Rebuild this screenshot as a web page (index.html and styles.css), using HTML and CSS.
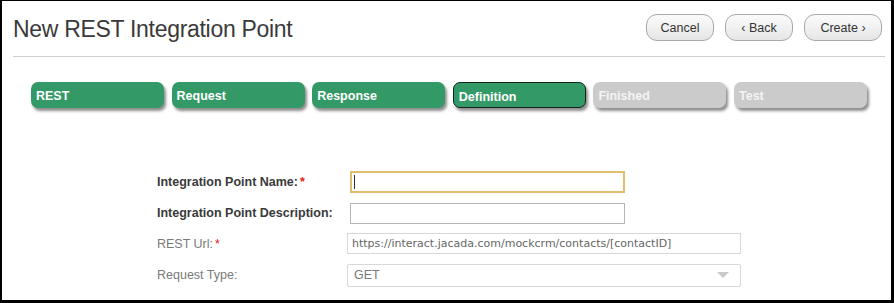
FILE: index.html
```html
<!DOCTYPE html>
<html lang="en">

<head>
  <meta charset="UTF-8" />
  <title>New REST Integration Point</title>
  <link rel="stylesheet" href="styles.css">
</head>

<body>
  <div class="frame">
    <header class="top">
      <h1>New REST Integration Point</h1>
      <div class="actions">
        <button class="btn btn-cancel">Cancel</button>
        <button class="btn btn-back">&lsaquo; Back</button>
        <button class="btn btn-create">Create &rsaquo;</button>
      </div>
    </header>

    <!-- wizard steps -->
    <ul class="steps">
      <li class="step done">REST</li>
      <li class="step done">Request</li>
      <li class="step done">Response</li>
      <li class="step done current">Definition</li>
      <li class="step todo">Finished</li>
      <li class="step todo">Test</li>
    </ul>

    <form class="fields">
      <label class="lbl strong">Integration Point Name:<span class="req">*</span></label>
      <input class="inp inp-name focus" type="text" />

      <label class="lbl strong">Integration Point Description:</label>
      <input class="inp inp-name" type="text" />

      <label class="lbl muted">REST Url:<span class="req">*</span></label>
      <input class="inp inp-wide" type="text" value="https://interact.jacada.com/mockcrm/contacts/[contactID]" disabled />

      <label class="lbl muted">Request Type:</label>
      <div class="inp inp-wide select">
        <span>GET</span>
        <span class="caret"></span>
      </div>
    </form>
  </div>
</body>

</html>
```

FILE: styles.css
```css
html,
body {
  margin: 0;
  padding: 0;
  background: #000;
}

.frame {
  box-sizing: border-box;
  width: 894px;
  height: 303px;
  background: #fff;
  border-style: solid;
  border-color: #000;
  border-width: 1px 3px 3px 2px;
  font-family: 'Liberation Sans', Arial, sans-serif;
  color: #333;
  overflow: hidden;
}

.top {
  display: flex;
  justify-content: space-between;
  align-items: flex-start;
  margin: 0 6px 0 11px;
  height: 55px;
  border-bottom: 1px solid #cfcfcf;
}

.top h1 {
  margin: 15px 0 0 0;
  font-weight: 400;
  font-size: 23px;
  letter-spacing: -0.3px;
  color: #3a3a3a;
}

.actions {
  display: flex;
  gap: 11px;
  margin: 13px 3px 0 0;
}

.btn {
  height: 27px;
  padding: 0;
  border: 1px solid #a9a9a9;
  border-radius: 11px;
  background: linear-gradient(#fbfbfb, #e6e6e6);
  font-family: 'Liberation Sans', Arial, sans-serif;
  font-size: 12.5px;
  color: #333;
  cursor: pointer;
}

.btn-cancel { width: 68px; }
.btn-back { width: 68px; }
.btn-create { width: 78px; }

.steps {
  list-style: none;
  display: flex;
  gap: 7.6px;
  margin: 25px 0 0 29px;
  padding: 0;
}

.step {
  box-sizing: border-box;
  width: 133px;
  height: 26px;
  padding: 7px 5px 0 5px;
  border-radius: 7px;
  font-size: 12.5px;
  font-weight: 700;
  color: #fff;
  box-shadow: 2px 3px 3px rgba(0, 0, 0, 0.45);
}

.step.done {
  background: #339966;
}

.step.current {
  border: 1px solid #14241b;
  padding: 7px 5px 0 5px;
}

.step.todo {
  background: #cbcbcb;
  color: #f4f4f4;
}

.fields {
  display: grid;
  grid-template-columns: 190px 394px;
  row-gap: 9.5px;
  align-items: center;
  margin: 63px 0 0 155px;
}

.lbl {
  font-size: 12.5px;
}

.lbl.strong {
  font-weight: 700;
  color: #3a3a3a;
}

.lbl.muted {
  color: #7a7a7a;
}

.req {
  color: #e02020;
  margin-left: 2px;
}

.inp {
  box-sizing: border-box;
  height: 21px;
  border: 1px solid #b5b5b5;
  background: #fff;
  font-family: 'DejaVu Sans', Verdana, sans-serif;
  font-size: 11px;
  color: #666;
  padding: 0 4px;
}

.inp-name {
  width: 275px;
  margin-left: 3px;
}

/* focused field, with its text cursor */
.inp.focus {
  height: 22px;
  border: 2px solid #e0be6a;
  outline: none;
  background: #fff linear-gradient(#333, #333) no-repeat 2px 2px / 1px 14px;
}

.inp-wide {
  width: 394px;
  border-color: #d8d8d8;
  background: #fff;
}

.select {
  display: flex;
  align-items: center;
  justify-content: space-between;
  height: 23px;
  font-family: 'Liberation Sans', Arial, sans-serif;
  font-size: 12.5px;
  color: #777;
  padding: 0 6px;
  border-radius: 2px;
}

.caret {
  width: 0;
  height: 0;
  border-left: 6px solid transparent;
  border-right: 6px solid transparent;
  border-top: 6px solid #c9c9c9;
  margin-right: 5px;
}
```
